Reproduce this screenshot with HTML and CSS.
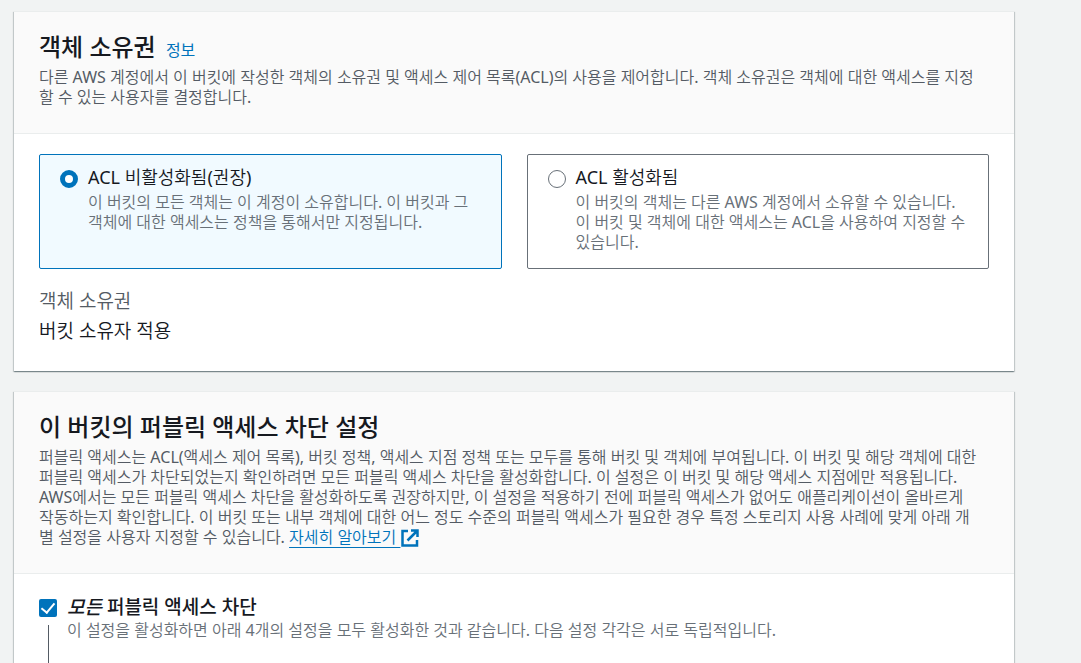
FILE: index.html
```html
<!DOCTYPE html>
<html lang="ko">
<head>
<meta charset="utf-8">
<meta name="viewport" content="width=device-width, initial-scale=1">
<title>객체 소유권</title>
<link rel="stylesheet" href="styles.css">
</head>
<body>
<main class="page">
  <section class="panel">
    <header class="panel-header">
      <h2 class="panel-title">객체 소유권 <a class="info-link" href="#">정보</a></h2>
      <p class="panel-description">다른 AWS 계정에서 이 버킷에 작성한 객체의 소유권 및 액세스 제어 목록(ACL)의 사용을 제어합니다. 객체 소유권은 객체에 대한 액세스를 지정할 수 있는 사용자를 결정합니다.</p>
    </header>
    <div class="panel-body">
      <div class="tiles">
        <label class="tile tile-selected" for="acl-off">
          <input class="radio" type="radio" name="acl" id="acl-off" checked>
          <span class="tile-text">
            <span class="tile-label">ACL 비활성화됨(권장)</span>
            <span class="hint">이 버킷의 모든 객체는 이 계정이 소유합니다. 이 버킷과 그 객체에 대한 액세스는 정책을 통해서만 지정됩니다.</span>
          </span>
        </label>
        <label class="tile" for="acl-on">
          <input class="radio" type="radio" name="acl" id="acl-on">
          <span class="tile-text">
            <span class="tile-label">ACL 활성화됨</span>
            <span class="hint">이 버킷의 객체는 다른 AWS 계정에서 소유할 수 있습니다. 이 버킷 및 객체에 대한 액세스는 ACL을 사용하여 지정할 수 있습니다.</span>
          </span>
        </label>
      </div>
      <dl class="summary">
        <dt class="summary-name">객체 소유권</dt>
        <dd class="summary-value">버킷 소유자 적용</dd>
      </dl>
    </div>
  </section>

  <section class="panel">
    <header class="panel-header">
      <h2 class="panel-title">이 버킷의 퍼블릭 액세스 차단 설정</h2>
      <p class="panel-description">퍼블릭 액세스는 ACL(액세스 제어 목록), 버킷 정책, 액세스 지점 정책 또는 모두를 통해 버킷 및 객체에 부여됩니다. 이 버킷 및 해당 객체에 대한 퍼블릭 액세스가 차단되었는지 확인하려면 모든 퍼블릭 액세스 차단을 활성화합니다. 이 설정은 이 버킷 및 해당 액세스 지점에만 적용됩니다. AWS에서는 모든 퍼블릭 액세스 차단을 활성화하도록 권장하지만, 이 설정을 적용하기 전에 퍼블릭 액세스가 없어도 애플리케이션이 올바르게 작동하는지 확인합니다. 이 버킷 또는 내부 객체에 대한 어느 정도 수준의 퍼블릭 액세스가 필요한 경우 특정 스토리지 사용 사례에 맞게 아래 개별 설정을 사용자 지정할 수 있습니다. <a class="learn-link" href="#">자세히 알아보기&nbsp;<svg class="external-icon" viewBox="0 0 18 18" aria-hidden="true"><path d="M7 2H1.500V16.500H16V11M10 1.500H16.500V8M16 2L6.500 11.500" /></svg></a></p>
    </header>
    <div class="panel-body">
      <div class="check-row">
        <div class="check-rail">
          <input class="checkbox" type="checkbox" id="block-all" checked>
          <span class="tree-line"></span>
        </div>
        <div class="check-text">
          <label class="check-label" for="block-all"><em>모든</em> 퍼블릭 액세스 차단</label>
          <p class="hint">이 설정을 활성화하면 아래 4개의 설정을 모두 활성화한 것과 같습니다. 다음 설정 각각은 서로 독립적입니다.</p>
        </div>
      </div>
    </div>
  </section>
</main>
</body>
</html>
```
FILE: styles.css
```css
* {
  box-sizing: border-box;
}

html,
body {
  height: 100%;
}

body {
  margin: 0;
  background: #f1f3f3;
  color: #16191f;
  font-family: "Noto Sans", "Noto Sans CJK KR DemiLight", "Noto Sans CJK KR Light", "Noto Sans CJK KR", sans-serif;
  font-size: 18px;
  line-height: 28px;
}

.page {
  display: flex;
  flex-direction: column;
  gap: 20px;
  height: 100%;
  overflow: hidden;
  padding: 11px 67px 0 14px;
}

.panel {
  flex: none;
  background: #fff;
  border-top: 1px solid #eaeded;
  box-shadow: 0 1px 1px 0 rgba(0, 28, 36, 0.3), 1px 1px 1px 0 rgba(0, 28, 36, 0.15), -1px 1px 1px 0 rgba(0, 28, 36, 0.15);
}

.panel-header {
  padding: 20px 25px 26px;
  background: #fafafa;
  border-bottom: 1px solid #eaeded;
}

.panel-title {
  margin: 0 0 5px;
  font-family: "Noto Sans", "Noto Sans CJK KR", sans-serif;
  font-size: 24px;
  font-weight: 500;
  line-height: 30px;
}

.info-link {
  margin-left: 4px;
  color: #0073bb;
  font-size: 16px;
  font-weight: 400;
  line-height: 16px;
  text-decoration: none;
}

.panel-description {
  margin: 0;
  padding-right: 12px;
  color: #545b64;
  font-size: 16px;
  line-height: 20px;
}

.learn-link {
  color: #0073bb;
  text-decoration: underline;
  text-decoration-thickness: 1px;
  text-underline-offset: 4px;
  text-decoration-skip-ink: none;
  white-space: nowrap;
}

.external-icon {
  width: 18px;
  height: 18px;
  margin-left: 1px;
  vertical-align: -4px;
  fill: none;
  stroke: #0073bb;
  stroke-width: 2.5;
}

.panel-body {
  padding: 20px 25px 25px;
}

.tiles {
  display: grid;
  grid-template-columns: 1fr 1fr;
  gap: 25px;
}

.tile {
  display: flex;
  gap: 10px;
  padding: 8px 20px 16px;
  border: 1px solid #687078;
  border-radius: 2px;
}

.tile-selected {
  background: #f1faff;
  border-color: #0073bb;
}

.radio {
  flex: none;
  appearance: none;
  width: 18px;
  height: 18px;
  margin: 7px 0 0;
  border: 1px solid #687078;
  border-radius: 50%;
  background: #fff;
}

.radio:checked {
  border: 5px solid #0073bb;
}

.tile-text,
.tile-label,
.hint {
  display: block;
}

.tile-label {
  margin-bottom: 1px;
}

.hint {
  margin: 0;
  color: #687078;
  font-size: 16px;
  line-height: 20px;
}

.summary {
  margin: 17px 0 0;
  font-size: 19px;
  line-height: 30px;
}

.summary-name {
  color: #545b64;
}

.summary-value {
  margin: 0;
}

.check-row {
  display: flex;
  gap: 10px;
  min-height: 90px;
}

.check-rail {
  display: flex;
  flex-direction: column;
  align-items: center;
  gap: 8px;
  padding-top: 5px;
}

.checkbox {
  flex: none;
  appearance: none;
  width: 18px;
  height: 18px;
  margin: 0;
  border-radius: 2px;
  background: #0073bb;
  display: grid;
  place-items: center;
}

.checkbox:checked::before {
  content: "";
  width: 6px;
  height: 11px;
  margin-bottom: 3px;
  border: solid #fff;
  border-width: 0 2px 2px 0;
  transform: rotate(40deg);
}

.tree-line {
  flex: 1;
  width: 1px;
  background: #545b64;
}

.check-label {
  display: block;
  font-family: "Noto Sans", "Noto Sans CJK KR", sans-serif;
  font-size: 19px;
  font-weight: 500;
  line-height: 26px;
}
```
